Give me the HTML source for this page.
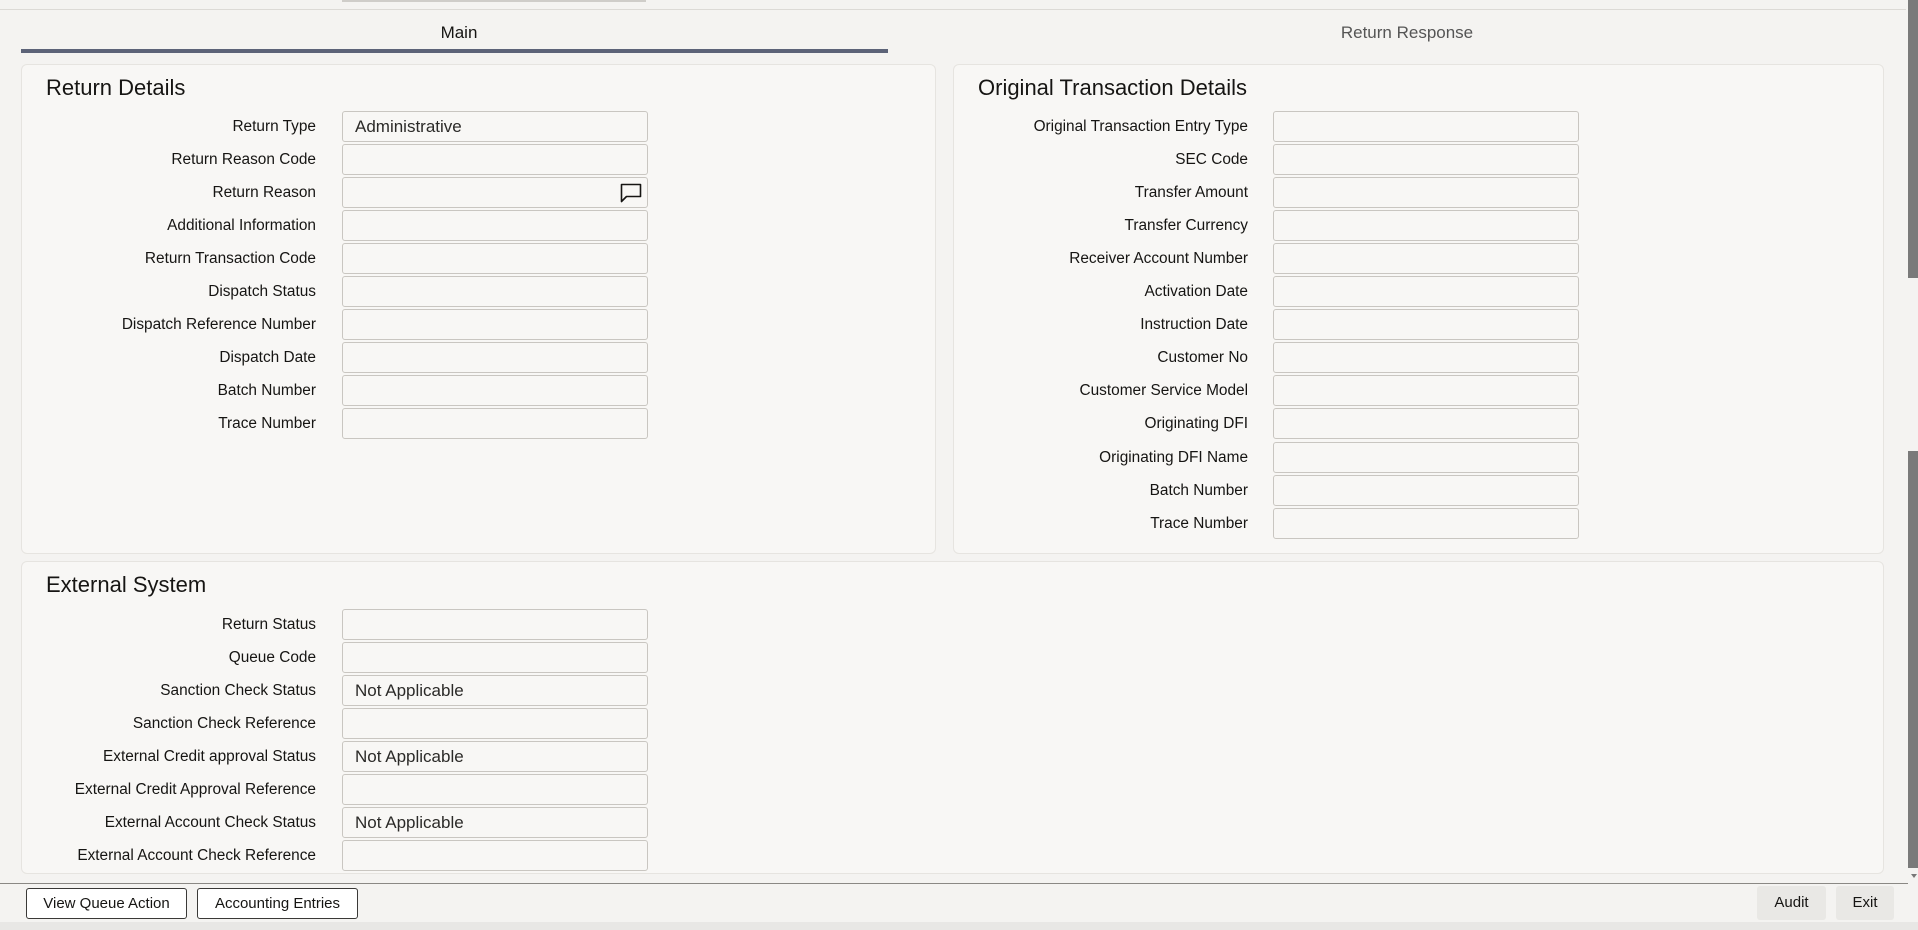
<!DOCTYPE html>
<html><head><meta charset="utf-8"><style>
*{box-sizing:border-box;margin:0;padding:0}
body{width:1918px;height:930px;overflow:hidden;background:#f4f3f1;font-family:"Liberation Sans",sans-serif;color:#161513;position:relative}
.a{position:absolute}
.panel{position:absolute;background:#f8f7f5;border:1px solid #e6e4e0;border-radius:6px}
.title{position:absolute;font-size:22px;color:#161513;font-weight:500}
.lbl{position:absolute;font-size:15.4px;text-align:right;width:300px;line-height:31px}
.inp{position:absolute;width:306px;height:31px;border:1px solid #c9c6c1;border-radius:3px;background:#f8f7f5;font-size:17px;line-height:29px;padding-left:12px;color:#2b2a28}
.btn{position:absolute;height:31px;border:1px solid #3a3937;border-radius:3px;background:#fff;font-size:15px;line-height:29px;text-align:center}
.gbtn{position:absolute;height:34px;background:#e9e8e5;font-size:15px;line-height:34px;text-align:center;border-radius:3px}
</style></head><body>
<div class="a" style="left:0;top:0;width:1906px;height:10px;border-bottom:1px solid #dcdad6"></div>
<div class="a" style="left:342px;top:0;width:304px;height:2px;background:#cfcdc9"></div>
<div class="a" style="left:0;top:23px;width:918px;text-align:center;font-size:17px;">Main</div>
<div class="a" style="left:918px;top:23px;width:978px;text-align:center;font-size:17px;color:#555">Return Response</div>
<div class="a" style="left:21px;top:49px;width:867px;height:4px;background:#5c6378"></div>

<div class="panel" style="left:21px;top:64px;width:915px;height:490px"></div>
<div class="panel" style="left:953px;top:64px;width:931px;height:490px"></div>
<div class="panel" style="left:21px;top:561px;width:1863px;height:313px"></div>

<div class="title" style="left:46px;top:75px">Return Details</div>
<div class="title" style="left:978px;top:75px">Original Transaction Details</div>
<div class="title" style="left:46px;top:572px">External System</div>

<div class="lbl" style="left:16px;top:111px">Return Type</div><div class="inp" style="left:342px;top:111px">Administrative</div>
<div class="lbl" style="left:16px;top:144px">Return Reason Code</div><div class="inp" style="left:342px;top:144px"></div>
<div class="lbl" style="left:16px;top:177px">Return Reason</div><div class="inp" style="left:342px;top:177px"><svg class="a" style="left:277px;top:5px" width="22" height="20" viewBox="0 0 22 20"><path d="M1.5 1.5h19v12h-14l-5 5z" fill="none" stroke="#161513" stroke-width="1.6" stroke-linejoin="round"/></svg></div>
<div class="lbl" style="left:16px;top:210px">Additional Information</div><div class="inp" style="left:342px;top:210px"></div>
<div class="lbl" style="left:16px;top:243px">Return Transaction Code</div><div class="inp" style="left:342px;top:243px"></div>
<div class="lbl" style="left:16px;top:276px">Dispatch Status</div><div class="inp" style="left:342px;top:276px"></div>
<div class="lbl" style="left:16px;top:309px">Dispatch Reference Number</div><div class="inp" style="left:342px;top:309px"></div>
<div class="lbl" style="left:16px;top:342px">Dispatch Date</div><div class="inp" style="left:342px;top:342px"></div>
<div class="lbl" style="left:16px;top:375px">Batch Number</div><div class="inp" style="left:342px;top:375px"></div>
<div class="lbl" style="left:16px;top:408px">Trace Number</div><div class="inp" style="left:342px;top:408px"></div>

<div class="lbl" style="left:948px;top:111px">Original Transaction Entry Type</div><div class="inp" style="left:1273px;top:111px"></div>
<div class="lbl" style="left:948px;top:144px">SEC Code</div><div class="inp" style="left:1273px;top:144px"></div>
<div class="lbl" style="left:948px;top:177px">Transfer Amount</div><div class="inp" style="left:1273px;top:177px"></div>
<div class="lbl" style="left:948px;top:210px">Transfer Currency</div><div class="inp" style="left:1273px;top:210px"></div>
<div class="lbl" style="left:948px;top:243px">Receiver Account Number</div><div class="inp" style="left:1273px;top:243px"></div>
<div class="lbl" style="left:948px;top:276px">Activation Date</div><div class="inp" style="left:1273px;top:276px"></div>
<div class="lbl" style="left:948px;top:309px">Instruction Date</div><div class="inp" style="left:1273px;top:309px"></div>
<div class="lbl" style="left:948px;top:342px">Customer No</div><div class="inp" style="left:1273px;top:342px"></div>
<div class="lbl" style="left:948px;top:375px">Customer Service Model</div><div class="inp" style="left:1273px;top:375px"></div>
<div class="lbl" style="left:948px;top:408px">Originating DFI</div><div class="inp" style="left:1273px;top:408px"></div>
<div class="lbl" style="left:948px;top:442px">Originating DFI Name</div><div class="inp" style="left:1273px;top:442px"></div>
<div class="lbl" style="left:948px;top:475px">Batch Number</div><div class="inp" style="left:1273px;top:475px"></div>
<div class="lbl" style="left:948px;top:508px">Trace Number</div><div class="inp" style="left:1273px;top:508px"></div>

<div class="lbl" style="left:16px;top:609px">Return Status</div><div class="inp" style="left:342px;top:609px"></div>
<div class="lbl" style="left:16px;top:642px">Queue Code</div><div class="inp" style="left:342px;top:642px"></div>
<div class="lbl" style="left:16px;top:675px">Sanction Check Status</div><div class="inp" style="left:342px;top:675px">Not Applicable</div>
<div class="lbl" style="left:16px;top:708px">Sanction Check Reference</div><div class="inp" style="left:342px;top:708px"></div>
<div class="lbl" style="left:16px;top:741px">External Credit approval Status</div><div class="inp" style="left:342px;top:741px">Not Applicable</div>
<div class="lbl" style="left:16px;top:774px">External Credit Approval Reference</div><div class="inp" style="left:342px;top:774px"></div>
<div class="lbl" style="left:16px;top:807px">External Account Check Status</div><div class="inp" style="left:342px;top:807px">Not Applicable</div>
<div class="lbl" style="left:16px;top:840px">External Account Check Reference</div><div class="inp" style="left:342px;top:840px"></div>

<div class="a" style="left:0;top:883px;width:1908px;height:1px;background:#8a8884"></div>
<div class="btn" style="left:26px;top:888px;width:161px">View Queue Action</div>
<div class="btn" style="left:197px;top:888px;width:161px">Accounting Entries</div>
<div class="gbtn" style="left:1757px;top:886px;width:69px">Audit</div>
<div class="gbtn" style="left:1836px;top:886px;width:58px">Exit</div>
<div class="a" style="left:0;top:922px;width:1918px;height:8px;background:#e8e7e5"></div>

<div class="a" style="left:1908px;top:0;width:10px;height:278px;background:#7a7a7a"></div>
<div class="a" style="left:1908px;top:451px;width:10px;height:417px;background:#7a7a7a"></div>
<div class="a" style="left:1911px;top:874px;width:0;height:0;border-left:3px solid transparent;border-right:3px solid transparent;border-top:4px solid #777"></div>
</body></html>
